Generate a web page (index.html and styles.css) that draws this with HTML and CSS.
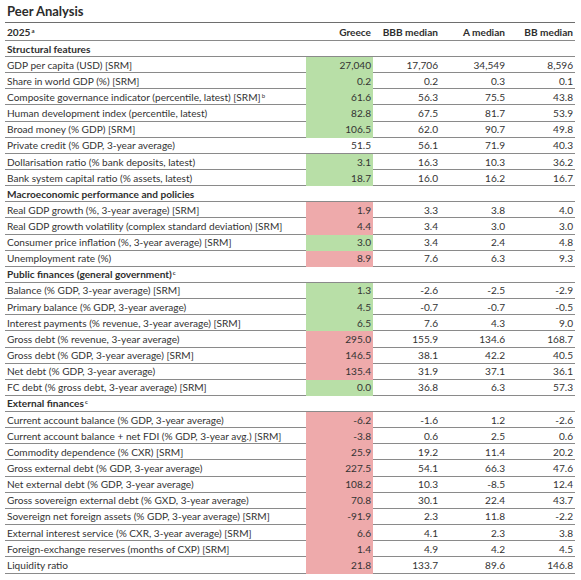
FILE: index.html
```html
<!DOCTYPE html>
<html lang="en">
<head>
  <meta charset="UTF-8" />
  <title>Peer Analysis</title>
  <link rel="stylesheet" href="styles.css">
</head>
<body>
  <div class="page">
    <h1 class="title">Peer Analysis</h1>
    <table class="peers">
      <colgroup>
        <col class="c-label"><col class="c-num"><col class="c-num"><col class="c-num"><col class="c-last">
      </colgroup>
      <thead>
        <tr class="head">
          <th class="label">2025<sup>a</sup></th>
          <th>Greece</th>
          <th>BBB median</th>
          <th>A median</th>
          <th>BB median</th>
        </tr>
      </thead>
      <tbody>
        <tr class="section"><td colspan="5">Structural features</td></tr>
        <tr><td>GDP per capita (USD) [SRM]</td><td class="good">27,040</td><td>17,706</td><td>34,549</td><td>8,596</td></tr>
        <tr><td>Share in world GDP (%) [SRM]</td><td class="good">0.2</td><td>0.2</td><td>0.3</td><td>0.1</td></tr>
        <tr><td>Composite governance indicator (percentile, latest) [SRM]<sup>b</sup></td><td class="good">61.6</td><td>56.3</td><td>75.5</td><td>43.8</td></tr>
        <tr><td>Human development index (percentile, latest)</td><td class="good">82.8</td><td>67.5</td><td>81.7</td><td>53.9</td></tr>
        <tr><td>Broad money (% GDP) [SRM]</td><td class="good">106.5</td><td>62.0</td><td>90.7</td><td>49.8</td></tr>
        <tr><td>Private credit (% GDP, 3-year average)</td><td>51.5</td><td>56.1</td><td>71.9</td><td>40.3</td></tr>
        <tr><td>Dollarisation ratio (% bank deposits, latest)</td><td class="good">3.1</td><td>16.3</td><td>10.3</td><td>36.2</td></tr>
        <tr><td>Bank system capital ratio (% assets, latest)</td><td class="good">18.7</td><td>16.0</td><td>16.2</td><td>16.7</td></tr>

        <tr class="section"><td colspan="5">Macroeconomic performance and policies</td></tr>
        <tr><td>Real GDP growth (%, 3-year average) [SRM]</td><td class="bad">1.9</td><td>3.3</td><td>3.8</td><td>4.0</td></tr>
        <tr><td>Real GDP growth volatility (complex standard deviation) [SRM]</td><td class="bad">4.4</td><td>3.4</td><td>3.0</td><td>3.0</td></tr>
        <tr><td>Consumer price inflation (%, 3-year average) [SRM]</td><td class="good">3.0</td><td>3.4</td><td>2.4</td><td>4.8</td></tr>
        <tr><td>Unemployment rate (%)</td><td class="bad">8.9</td><td>7.6</td><td>6.3</td><td>9.3</td></tr>

        <tr class="section"><td colspan="5">Public finances (general government)<sup>c</sup></td></tr>
        <tr><td>Balance (% GDP, 3-year average) [SRM]</td><td class="good">1.3</td><td>-2.6</td><td>-2.5</td><td>-2.9</td></tr>
        <tr><td>Primary balance (% GDP, 3-year average)</td><td class="good">4.5</td><td>-0.7</td><td>-0.7</td><td>-0.5</td></tr>
        <tr><td>Interest payments (% revenue, 3-year average) [SRM]</td><td class="good">6.5</td><td>7.6</td><td>4.3</td><td>9.0</td></tr>
        <tr><td>Gross debt (% revenue, 3-year average)</td><td class="bad">295.0</td><td>155.9</td><td>134.6</td><td>168.7</td></tr>
        <tr><td>Gross debt (% GDP, 3-year average) [SRM]</td><td class="bad">146.5</td><td>38.1</td><td>42.2</td><td>40.5</td></tr>
        <tr><td>Net debt (% GDP, 3-year average)</td><td class="bad">135.4</td><td>31.9</td><td>37.1</td><td>36.1</td></tr>
        <tr><td>FC debt (% gross debt, 3-year average) [SRM]</td><td class="good">0.0</td><td>36.8</td><td>6.3</td><td>57.3</td></tr>

        <tr class="section"><td colspan="5">External finances<sup>c</sup></td></tr>
        <tr><td>Current account balance (% GDP, 3-year average)</td><td class="bad">-6.2</td><td>-1.6</td><td>1.2</td><td>-2.6</td></tr>
        <tr><td>Current account balance + net FDI (% GDP, 3-year avg.) [SRM]</td><td class="bad">-3.8</td><td>0.6</td><td>2.5</td><td>0.6</td></tr>
        <tr><td>Commodity dependence (% CXR) [SRM]</td><td class="bad">25.9</td><td>19.2</td><td>11.4</td><td>20.2</td></tr>
        <tr><td>Gross external debt (% GDP, 3-year average)</td><td class="bad">227.5</td><td>54.1</td><td>66.3</td><td>47.6</td></tr>
        <tr><td>Net external debt (% GDP, 3-year average)</td><td class="bad">108.2</td><td>10.3</td><td>-8.5</td><td>12.4</td></tr>
        <tr><td>Gross sovereign external debt (% GXD, 3-year average)</td><td class="bad">70.8</td><td>30.1</td><td>22.4</td><td>43.7</td></tr>
        <tr><td>Sovereign net foreign assets (% GDP, 3-year average) [SRM]</td><td class="bad">-91.9</td><td>2.3</td><td>11.8</td><td>-2.2</td></tr>
        <tr><td>External interest service (% CXR, 3-year average) [SRM]</td><td class="bad">6.6</td><td>4.1</td><td>2.3</td><td>3.8</td></tr>
        <tr><td>Foreign-exchange reserves (months of CXP) [SRM]</td><td class="bad">1.4</td><td>4.9</td><td>4.2</td><td>4.5</td></tr>
        <tr><td>Liquidity ratio</td><td class="bad">21.8</td><td>133.7</td><td>89.6</td><td>146.8</td></tr>
      </tbody>
    </table>
  </div>
</body>
</html>
```

FILE: styles.css
```css
* { margin: 0; padding: 0; box-sizing: border-box; }
body {
  font-family: Lato, "Liberation Sans", sans-serif;
  background: #fff;
  color: #333;
}
.page {
  padding: 3px 6px 0 5px;
  width: 581px;
}
.title {
  font-size: 13px;
  font-weight: 700;
  color: #2b2b2b;
  padding-left: 2px;
  height: 19px;
  line-height: 16px;
}
.peers {
  width: 570px;
  border-collapse: separate;
  border-spacing: 0;
  table-layout: fixed;
  font-size: 10.1px;
  border-top: 1px solid #6e6e6e;
}
.c-label { width: 301px; }
.c-num { width: 67px; }
.c-last { width: 68px; }
.peers th,
.peers td {
  border-bottom: 1px solid #8a8a8a;
  padding: 0 2px;
  height: 16.16px;
  line-height: 14px;
  text-align: right;
  white-space: nowrap;
  vertical-align: middle;
}
.peers th.label,
.peers td:first-child { text-align: left; }
.head th {
  font-weight: 700;
  height: 18px;
  color: #2e2e2e;
}
.section td {
  font-weight: 700;
  text-align: left;
  height: 16px;
  color: #2e2e2e;
}
.peers sup {
  font-size: 6px;
  vertical-align: 3px;
  line-height: 0;
  margin-left: 1px;
}
.peers td.good {
  background: #b8dfa7;
  border-bottom-color: transparent;
}
.peers td.bad {
  background: #eeaaab;
  border-bottom-color: transparent;
}
```
